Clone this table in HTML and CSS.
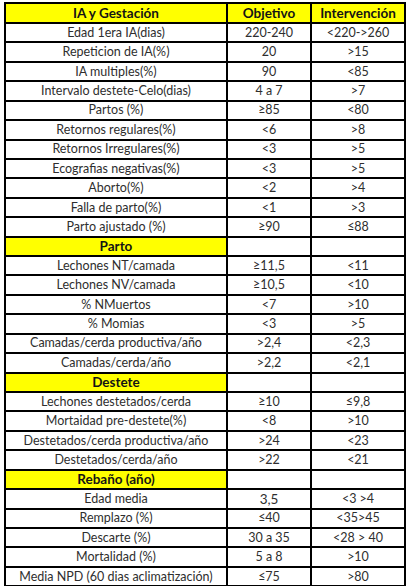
FILE: index.html
```html
<!DOCTYPE html>
<html lang="es">
<head>
<meta charset="utf-8">
<link rel="stylesheet" href="styles.css">
</head>
<body>
<table class="grid">
  <colgroup>
    <col class="c1"><col class="c2"><col class="c3">
  </colgroup>
  <tr class="head"><th>IA y Gestación</th><th>Objetivo</th><th>Intervención</th></tr>
  <tr><td>Edad 1era IA(dias)</td><td>220-240</td><td>&lt;220-&gt;260</td></tr>
  <tr><td>Repeticion de IA(%)</td><td>20</td><td>&gt;15</td></tr>
  <tr><td>IA multiples(%)</td><td>90</td><td>&lt;85</td></tr>
  <tr><td>Intervalo destete-Celo(dias)</td><td>4 a 7</td><td>&gt;7</td></tr>
  <tr><td>Partos (%)</td><td>≥85</td><td>&lt;80</td></tr>
  <tr><td>Retornos regulares(%)</td><td>&lt;6</td><td>&gt;8</td></tr>
  <tr><td>Retornos Irregulares(%)</td><td>&lt;3</td><td>&gt;5</td></tr>
  <tr><td>Ecografias negativas(%)</td><td>&lt;3</td><td>&gt;5</td></tr>
  <tr><td>Aborto(%)</td><td>&lt;2</td><td>&gt;4</td></tr>
  <tr><td>Falla de parto(%)</td><td>&lt;1</td><td>&gt;3</td></tr>
  <tr><td>Parto ajustado (%)</td><td>≥90</td><td>≤88</td></tr>
  <tr class="section"><th>Parto</th><td></td><td></td></tr>
  <tr><td>Lechones NT/camada</td><td>≥11,5</td><td>&lt;11</td></tr>
  <tr><td>Lechones NV/camada</td><td>≥10,5</td><td>&lt;10</td></tr>
  <tr><td>% NMuertos</td><td>&lt;7</td><td>&gt;10</td></tr>
  <tr><td>% Momias</td><td>&lt;3</td><td>&gt;5</td></tr>
  <tr><td>Camadas/cerda productiva/año</td><td>&gt;2,4</td><td>&lt;2,3</td></tr>
  <tr><td>Camadas/cerda/año</td><td>&gt;2,2</td><td>&lt;2,1</td></tr>
  <tr class="section"><th>Destete</th><td></td><td></td></tr>
  <tr><td>Lechones destetados/cerda</td><td>≥10</td><td>≤9,8</td></tr>
  <tr><td>Mortaidad pre-destete(%)</td><td>&lt;8</td><td>&gt;10</td></tr>
  <tr><td>Destetados/cerda productiva/año</td><td>&gt;24</td><td>&lt;23</td></tr>
  <tr><td>Destetados/cerda/año</td><td>&gt;22</td><td>&lt;21</td></tr>
  <tr class="section"><th>Rebaño (año)</th><td></td><td></td></tr>
  <tr><td>Edad media</td><td class="big">3,5</td><td>&lt;3 &gt;4</td></tr>
  <tr><td>Remplazo (%)</td><td>≤40</td><td>&lt;35&gt;45</td></tr>
  <tr><td>Descarte (%)</td><td>30 a 35</td><td>&lt;28 &gt; 40</td></tr>
  <tr><td>Mortalidad (%)</td><td>5 a 8</td><td>&gt;10</td></tr>
  <tr><td>Media NPD (60 dias aclimatización)</td><td>≤75</td><td>&gt;80</td></tr>
</table>
</body>
</html>
```
FILE: styles.css
```css
html, body {
  margin: 0;
  padding: 0;
  background: #ffffff;
  overflow: hidden;
}
body {
  padding: 2px 0 0 4px;
  font-family: Lato, "Open Sans", sans-serif;
  color: #2e2e2e;
}
.grid {
  border-collapse: collapse;
  table-layout: fixed;
  width: 402px;
  font-size: 12.5px;
}
.c1 { width: 222px; }
.c2 { width: 84px; }
.c3 { width: 94px; }
.grid th,
.grid td {
  border: 2px solid #000;
  padding: 0;
  text-align: center;
  vertical-align: middle;
  white-space: nowrap;
  line-height: 14px;
}
.grid tr { height: 19.43px; }
.grid tr.head { height: 20px; }
.grid th {
  font-weight: 700;
  color: #141414;
  font-size: 13.5px;
}
.head th { background: #ffff00; }
.section th { background: #ffff00; }
.big { font-size: 13.5px; }
```
